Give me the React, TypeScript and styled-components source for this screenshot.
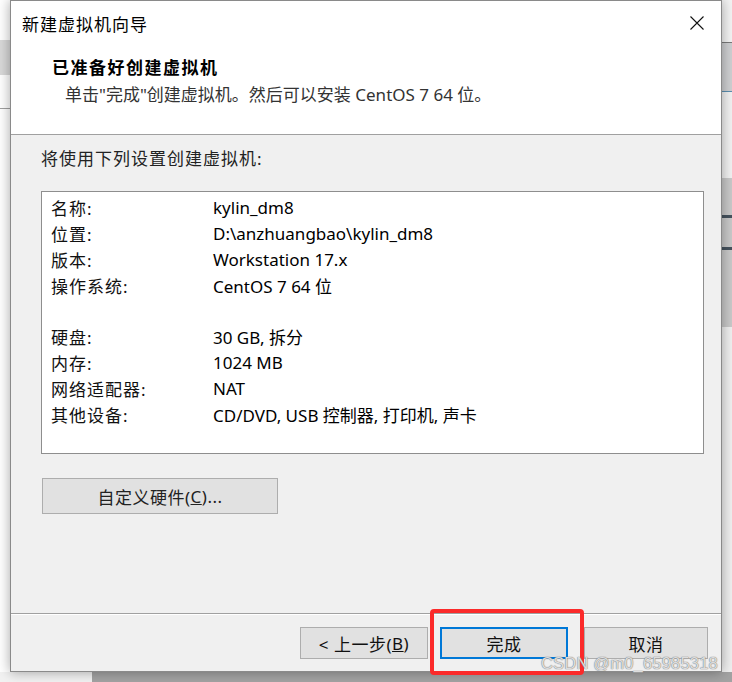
import React from 'react';
import styled, {createGlobalStyle} from 'styled-components';

const GlobalStyle = createGlobalStyle`
  html, body {
    margin: 0;
    padding: 0;
    background: #f0f0f0;
  }
  * {
    box-sizing: border-box;
  }
`;

const FONT = `"Noto Sans", "Noto Sans CJK SC", sans-serif`;

type Row = { label: string; value: string } | null;

const rows: Row[] = [
    {label: '名称:', value: 'kylin_dm8'},
    {label: '位置:', value: 'D:\\anzhuangbao\\kylin_dm8'},
    {label: '版本:', value: 'Workstation 17.x'},
    {label: '操作系统:', value: 'CentOS 7 64 位'},
    null,
    {label: '硬盘:', value: '30 GB, 拆分'},
    {label: '内存:', value: '1024 MB'},
    {label: '网络适配器:', value: 'NAT'},
    {label: '其他设备:', value: 'CD/DVD, USB 控制器, 打印机, 声卡'},
];

const leftBands = [
    {h: 40, bg: '#ffffff'},
    {h: 35, bg: '#d9d9d9'},
    {h: 33, bg: '#ffffff'},
    {h: 1, bg: '#a0a0a0'},
    {h: 563, bg: '#ffffff'},
];

const rightBands = [
    {h: 42, bg: '#f4f4f4'},
    {h: 1, bg: '#7a7a7a'},
    {h: 48, bg: '#cfd0d2'},
    {h: 1, bg: '#5b8fb0'},
    {h: 86, bg: '#f2f2f2'},
    {h: 37, bg: '#c9c9c9'},
    {h: 3, bg: '#46535e'},
    {h: 29, bg: '#c9c9c9'},
    {h: 3, bg: '#46535e'},
    {h: 77, bg: '#c9c9c9'},
    {h: 355, bg: '#f0f0f0'},
];

export default function App() {
    return (
        <>
            <GlobalStyle/>
            <Desktop>
                <Strip>
                    {leftBands.map((b, i) => (
                        <Band key={i} $h={b.h} $bg={b.bg}/>
                    ))}
                </Strip>
                <Dialog>
                    <Header>
                        <TitleBar>
                            <WindowTitle>新建虚拟机向导</WindowTitle>
                            <CloseButton aria-label="关闭">
                                <svg width="14" height="14" viewBox="0 0 14 14">
                                    <path d="M0.5 0.5 L13.5 13.5 M13.5 0.5 L0.5 13.5" stroke="#111" strokeWidth="1.1" fill="none"/>
                                </svg>
                            </CloseButton>
                        </TitleBar>
                        <PageHeading>已准备好创建虚拟机</PageHeading>
                        <PageHint>单击"完成"创建虚拟机。然后可以安装 CentOS 7 64 位。</PageHint>
                    </Header>
                    <Body>
                        <Intro>将使用下列设置创建虚拟机:</Intro>
                        <SummaryBox>
                            {rows.map((r, i) =>
                                r ? (
                                    <SummaryRow key={i}>
                                        <Label>{r.label}</Label>
                                        <Value>{r.value}</Value>
                                    </SummaryRow>
                                ) : (
                                    <SummaryRow key={i}/>
                                )
                            )}
                        </SummaryBox>
                        <CustomButton>
                            自定义硬件(<u>C</u>)...
                        </CustomButton>
                    </Body>
                    <Footer>
                        <WizardButton $w={128}>&lt; 上一步(<u>B</u>)</WizardButton>
                        <WizardButton $w={128} $primary>完成</WizardButton>
                        <WizardButton $w={124} $extraGap={4}>取消</WizardButton>
                        <Highlight/>
                    </Footer>
                </Dialog>
                <Strip>
                    {rightBands.map((b, i) => (
                        <Band key={i} $h={b.h} $bg={b.bg}/>
                    ))}
                </Strip>
                <BottomStrip>
                    <BottomLight/>
                    <BottomGray/>
                </BottomStrip>
                <Watermark>CSDN @m0_65985318</Watermark>
            </Desktop>
        </>
    );
}

const Desktop = styled.div`
  position: relative;
  width: 732px;
  height: 682px;
  overflow: hidden;
  display: grid;
  grid-template-columns: 10px 712px 10px;
  grid-template-rows: 672px 10px;
  font-family: ${FONT};
  color: #000;
`;

const Strip = styled.div`
  display: flex;
  flex-direction: column;
  overflow: hidden;
`;

const Band = styled.div<{ $h: number; $bg: string }>`
  flex: 0 0 ${(p) => p.$h}px;
  background: ${(p) => p.$bg};
`;

const BottomStrip = styled.div`
  grid-column: 1 / 4;
  display: flex;
`;

const BottomLight = styled.div`
  width: 92px;
  background: #f2f2f2;
`;

const BottomGray = styled.div`
  flex: 1;
  background: #a3a3a3;
`;

const Dialog = styled.div`
  position: relative;
  z-index: 1;
  display: flex;
  flex-direction: column;
  border: 1px solid #8a8a8a;
  background: #f0f0f0;
  box-shadow: 0 0 12px rgba(0, 0, 0, 0.35);
`;

const Header = styled.div`
  height: 134px;
  background: #fff;
  border-bottom: 1px solid #a0a0a0;
  display: flex;
  flex-direction: column;
`;

const TitleBar = styled.div`
  height: 44px;
  display: flex;
  align-items: center;
  justify-content: space-between;
  padding: 0 17px 0 11px;
`;

const WindowTitle = styled.div`
  font-size: 17px;
  letter-spacing: 1px;
`;

const CloseButton = styled.div`
  width: 14px;
  height: 14px;
  display: flex;
  margin-top: -1px;
`;

const PageHeading = styled.div`
  margin: 11px 0 0 41px;
  font-size: 17px;
  font-weight: 700;
  letter-spacing: 1.5px;
  line-height: 24px;
`;

const PageHint = styled.div`
  margin: 3px 0 0 54px;
  font-size: 17px;
  line-height: 24px;
  color: #333;
`;

const Body = styled.div`
  flex: 1;
  padding: 12px 17px 0 30px;
  display: flex;
  flex-direction: column;
`;

const Intro = styled.div`
  font-size: 17px;
  line-height: 24px;
  letter-spacing: 1px;
  color: #222;
`;

const SummaryBox = styled.div`
  margin-top: 20px;
  height: 263px;
  background: #fff;
  border: 1px solid #8e8e8e;
  padding: 3px 0 0 9px;
`;

const SummaryRow = styled.div`
  height: 25.8px;
  display: flex;
  align-items: center;
  font-size: 17px;
`;

const Label = styled.span`
  width: 162px;
  letter-spacing: 1px;
  color: #111;
`;

const Value = styled.span`
  color: #000;
`;

const CustomButton = styled.div`
  margin: 24px 0 0 1px;
  width: 236px;
  height: 36px;
  background: #e1e1e1;
  border: 1px solid #adadad;
  display: flex;
  align-items: center;
  justify-content: center;
  font-size: 17px;
  color: #222;
  letter-spacing: 0.5px;
`;

const Footer = styled.div`
  position: relative;
  height: 58px;
  border-top: 1px solid #a0a0a0;
  box-shadow: inset 0 1px 0 #fff;
  display: flex;
  align-items: flex-start;
  justify-content: flex-end;
  gap: 12px;
  padding: 13px 13px 0 0;
`;

const WizardButton = styled.div<{ $w: number; $primary?: boolean; $extraGap?: number }>`
  width: ${(p) => p.$w}px;
  height: 32px;
  margin-left: ${(p) => p.$extraGap ?? 0}px;
  background: #e1e1e1;
  border: ${(p) => (p.$primary ? '2px solid #0078d7' : '1px solid #adadad')};
  display: flex;
  align-items: center;
  justify-content: center;
  font-size: 17px;
  color: #111;
  letter-spacing: 0.5px;
`;

const Highlight = styled.div`
  position: absolute;
  left: 419px;
  top: -5px;
  width: 154px;
  height: 66px;
  border: 4px solid #fb2a2a;
  border-radius: 4px;
  pointer-events: none;
`;

const Watermark = styled.div`
  position: absolute;
  z-index: 2;
  left: 541px;
  top: 654px;
  font-family: "Liberation Sans", sans-serif;
  font-size: 16.5px;
  color: rgba(255, 255, 255, 0.75);
  text-shadow: 0 0 1px #777, 0 0 1px #777;
  letter-spacing: 0.2px;
`;
